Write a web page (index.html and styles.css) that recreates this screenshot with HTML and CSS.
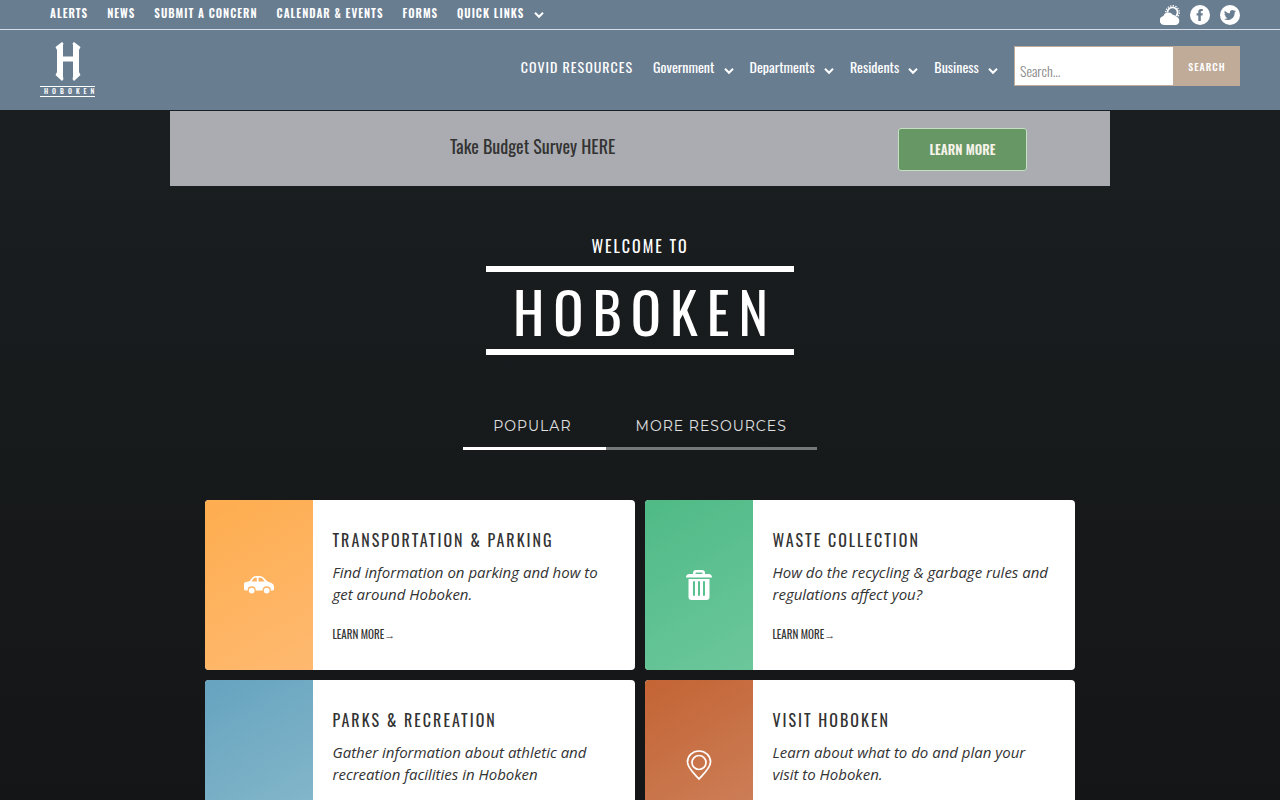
FILE: index.html
```
<!DOCTYPE html>
<html lang="en">
<head>
    <meta charset="UTF-8">
    <meta name="viewport" content="width=device-width, initial-scale=1.0">
    <title>City of Hoboken</title>
    <link rel="stylesheet" href="styles.css">
</head>
<body>
<svg class="sprite" width="0" height="0" aria-hidden="true">
    <symbol id="chevron" viewBox="0 0 10 8">
        <path d="M1 1.8 L5 5.8 L9 1.8" fill="none" stroke="currentColor" stroke-width="2"/>
    </symbol>
</svg>

<header>
    <div class="top-bar">
        <nav class="top-nav">
            <a href="#">Alerts</a>
            <a href="#">News</a>
            <a href="#">Submit a Concern</a>
            <a href="#">Calendar &amp; Events</a>
            <a href="#">Forms</a>
            <a href="#">Quick Links <svg class="chevron"><use href="#chevron"/></svg></a>
        </nav>
        <div class="social">
            <a href="#" aria-label="Weather">
                <svg viewBox="0 0 20 20">
                    <circle cx="12.5" cy="7.5" r="6.8" fill="none" stroke="#fff" stroke-width="1.2" stroke-dasharray="1.4 1.27"/>
                    <circle cx="12.5" cy="7.5" r="5.1" fill="none" stroke="#fff" stroke-width="1.8"/>
                    <path d="M4 20 A4.6 4.6 0 0 1 3.4 10.9 A5.3 5.3 0 0 1 12.8 9.8 A3.6 3.6 0 0 1 15.8 11.4 A4.4 4.4 0 0 1 15.8 20 Z" fill="#fff" stroke="#697d91" stroke-width="0.8" paint-order="stroke"/>
                </svg>
            </a>
            <a href="#" aria-label="Facebook">
                <svg viewBox="0 0 20 20">
                    <circle cx="10" cy="10" r="10" fill="#fff"/>
                    <path d="M8.3 16 V10.4 H6.6 V8.2 H8.3 V6.8 C8.3 4.9 9.3 4 11 4 H12.8 V6.1 H11.6 C11 6.1 10.8 6.4 10.8 7 V8.2 H12.8 L12.5 10.4 H10.8 V16 Z" fill="#697d91"/>
                </svg>
            </a>
            <a href="#" aria-label="Twitter">
                <svg viewBox="0 0 20 20">
                    <circle cx="10" cy="10" r="10" fill="#fff"/>
                    <path d="M16 6.3 L14.6 7.7 C14.8 12 11.5 15 7.8 15 C6.3 15 5 14.6 4 13.9 C5.4 14 6.6 13.6 7.5 12.9 C6.4 12.8 5.6 12.1 5.3 11.2 L6.3 11.2 C5.1 10.8 4.4 9.9 4.4 8.7 L5.5 9 C4.4 8.2 4.2 6.8 4.8 5.7 C6.1 7.3 7.9 8.2 9.9 8.3 C9.5 6.3 10.8 5 12.3 5 C13 5 13.6 5.3 14.1 5.8 L15.6 5.2 L14.6 6.5 Z" fill="#697d91"/>
                </svg>
            </a>
        </div>
    </div>

    <div class="main-bar">
        <a class="logo" href="#" aria-label="Hoboken home">
            <svg viewBox="0 0 26 40">
                <path d="M7 0 L8.5 1.5 L8 3 V14.5 H18 V3 L17.5 1.5 L19 0 L25.5 5 L24 8 V30 L25.5 33 L19 39 L17.5 37 L18 35 V19.5 H8 V35 L8.5 37 L7 39 L0.5 33 L2 30 V8 L0.5 5 Z" fill="#fff"/>
            </svg>
            <span>HOBOKEN</span>
        </a>
        <nav class="main-nav">
            <a class="covid" href="#">Covid Resources</a>
            <a href="#">Government <svg class="chevron"><use href="#chevron"/></svg></a>
            <a href="#">Departments <svg class="chevron"><use href="#chevron"/></svg></a>
            <a href="#">Residents <svg class="chevron"><use href="#chevron"/></svg></a>
            <a href="#">Business <svg class="chevron"><use href="#chevron"/></svg></a>
        </nav>
        <form class="search">
            <input type="text" placeholder="Search..." aria-label="Search">
            <button type="submit">Search</button>
        </form>
    </div>
</header>

<section class="banner">
    <p>Take Budget Survey HERE</p>
    <a class="banner-button" href="#">Learn More</a>
</section>

<main>
    <div class="welcome">
        <p>Welcome to</p>
        <h1>HOBOKEN</h1>
    </div>

    <div class="tabs">
        <button class="active" type="button">Popular</button>
        <button type="button">More Resources</button>
    </div>

    <div class="cards">
        <article class="card">
            <div class="card-icon orange">
                <svg width="30" height="18" viewBox="0 0 30 18">
                    <path d="M0 7.5 Q0 6.2 2 6 L5.5 5.3 L8 2 Q9.5 0 12 0 H16 Q18 0 19.5 1.5 L23.5 5.5 L27.5 7 Q30 8 30 10.5 V13.5 Q30 14.5 28.5 14.5 H2 Q0 14.5 0 13 Z" fill="#fff"/>
                    <path d="M7.5 5.5 L9.6 2.6 Q10.3 1.7 11.3 1.7 H12.8 V5.5 Z M14.5 1.7 H16.2 Q17.5 1.7 18.3 2.6 L20.7 5.5 H14.5 Z" fill="#feb25f"/>
                    <circle cx="7.7" cy="14.3" r="4.1" fill="#feb25f"/>
                    <circle cx="22.7" cy="14.3" r="4.1" fill="#feb25f"/>
                    <circle cx="7.7" cy="14.6" r="2.9" fill="#fff"/>
                    <circle cx="22.7" cy="14.6" r="2.9" fill="#fff"/>
                </svg>
            </div>
            <div class="card-text">
                <h2>Transportation &amp; Parking</h2>
                <p>Find information on parking and how to get around Hoboken.</p>
                <a href="#">Learn More<span class="arrow">→</span></a>
            </div>
        </article>
        <article class="card">
            <div class="card-icon green">
                <svg width="26" height="30" viewBox="0 0 26 30">
                    <path d="M7 5 V3 Q7 0 10 0 H16 Q19 0 19 3 V5 H16.5 V3.5 Q16.5 2.5 15.5 2.5 H10.5 Q9.5 2.5 9.5 3.5 V5 Z" fill="#fff"/>
                    <path d="M0 7.5 Q0 4 3.5 4 H22.5 Q26 4 26 7.5 Z M2.5 9 H23.5 V27 Q23.5 30 20.5 30 H5.5 Q2.5 30 2.5 27 Z" fill="#fff"/>
                    <path d="M8 12 V25 M13 12 V25 M18 12 V25" stroke="#59c08f" stroke-width="2" stroke-linecap="round"/>
                </svg>
            </div>
            <div class="card-text">
                <h2>Waste Collection</h2>
                <p>How do the recycling &amp; garbage rules and regulations affect you?</p>
                <a href="#">Learn More<span class="arrow">→</span></a>
            </div>
        </article>
        <article class="card">
            <div class="card-icon blue"></div>
            <div class="card-text">
                <h2>Parks &amp; Recreation</h2>
                <p>Gather information about athletic and recreation facilities in Hoboken</p>
                <a href="#">Learn More<span class="arrow">→</span></a>
            </div>
        </article>
        <article class="card">
            <div class="card-icon rust">
                <svg width="26" height="30" viewBox="0 0 26 30" fill="none" stroke="#fff" stroke-width="1.7">
                    <path d="M13 29 C9 24.5 1.5 18 1.5 12 A11.5 11 0 0 1 24.5 12 C24.5 18 17 24.5 13 29 Z"/>
                    <circle cx="13" cy="12.5" r="7"/>
                </svg>
            </div>
            <div class="card-text">
                <h2>Visit Hoboken</h2>
                <p>Learn about what to do and plan your visit to Hoboken.</p>
                <a href="#">Learn More<span class="arrow">→</span></a>
            </div>
        </article>
    </div>
</main>
</body>
</html>
```
FILE: styles.css
```
* {
    box-sizing: border-box;
}

body {
    margin: 0;
    min-height: 100vh;
    font-family: 'Oswald', 'Liberation Sans', sans-serif;
    color: #333;
    background: linear-gradient(#1b2022, #141516 820px);
}

a {
    color: inherit;
    text-decoration: none;
}

.sprite {
    position: absolute;
}

.chevron {
    width: 10px;
    height: 8px;
}

header {
    color: #fff;
    background: #697d91;
}

.top-bar {
    display: flex;
    justify-content: space-between;
    align-items: center;
    height: 30px;
    padding: 0 40px 0 50px;
    border-bottom: 1px solid #d5dee8;
}

.top-nav {
    display: flex;
    gap: 19px;
    font-size: 11px;
    line-height: 26px;
    font-weight: 600;
    letter-spacing: 1px;
    text-transform: uppercase;
    padding-bottom: 3px;
}

.top-nav .chevron {
    margin-left: 6px;
    vertical-align: -1px;
}

.social {
    display: flex;
    gap: 10px;
}

.social svg {
    display: block;
    width: 20px;
    height: 20px;
}

.main-bar {
    display: flex;
    align-items: center;
    height: 80px;
    padding: 0 40px;
}

.logo {
    display: flex;
    flex-direction: column;
    align-items: center;
    gap: 4px;
    margin-right: auto;
    padding-bottom: 1px;
}

.logo svg {
    width: 26px;
    height: 40px;
}

.logo span {
    width: 55px;
    border-top: 1px solid #fff;
    border-bottom: 1px solid #fff;
    font-size: 7px;
    line-height: 9px;
    font-weight: 500;
    letter-spacing: 4px;
    text-indent: 4px;
    text-align: center;
}

.main-nav {
    display: flex;
    gap: 16px;
    margin-right: 16px;
    font-size: 14px;
    line-height: 24px;
    padding-bottom: 6px;
}

.main-nav .chevron {
    margin-left: 6px;
    vertical-align: -2px;
}

.covid {
    margin-right: 4px;
    letter-spacing: 1px;
    text-transform: uppercase;
}

.search {
    display: flex;
    height: 40px;
    margin-bottom: 8px;
    border: 1px solid #c0aa98;
}

.search input {
    width: 158px;
    padding: 8px 5px 0;
    border: 0;
    font-family: inherit;
    font-size: 14px;
    font-weight: 300;
    background: #fff;
}

.search input::placeholder {
    color: #8a8a8a;
}

.search button {
    width: 66px;
    padding: 0 0 0 2px;
    border: 0;
    font-family: inherit;
    font-size: 10px;
    font-weight: 500;
    letter-spacing: 1px;
    text-transform: uppercase;
    color: #fff;
    background: #c0aa98;
    cursor: pointer;
}

.banner {
    display: flex;
    align-items: center;
    justify-content: space-between;
    max-width: 940px;
    height: 75px;
    margin: 1px auto 0;
    padding: 2px 83px 0 280px;
    background: #abacb1;
}

.banner p {
    margin: 0;
    padding-bottom: 8px;
    font-size: 18px;
}

.banner-button {
    width: 129px;
    border: 1px solid #c5e0c5;
    border-radius: 3px;
    font-size: 13px;
    line-height: 41px;
    font-weight: 600;
    text-align: center;
    text-transform: uppercase;
    color: #f6f3ea;
    background: #679764;
}

main {
    max-width: 910px;
    margin: 0 auto;
    padding: 48px 20px 40px;
}

.welcome {
    width: 308px;
    margin: 0 auto;
    text-align: center;
    color: #fff;
}

.welcome p {
    margin: 0 0 8px;
    font-size: 16px;
    line-height: 24px;
    letter-spacing: 2px;
    text-transform: uppercase;
}

.welcome h1 {
    margin: 0;
    padding-left: 10px;
    border-top: 6px solid #fff;
    border-bottom: 6px solid #fff;
    font-size: 56px;
    line-height: 77px;
    font-weight: 400;
    letter-spacing: 9px;
}

.tabs {
    display: flex;
    justify-content: center;
    margin: 50px 0;
}

.tabs button {
    padding: 6px 30px;
    border: 0;
    border-bottom: 3px solid #757778;
    font-family: 'Montserrat', 'Open Sans', sans-serif;
    font-size: 14px;
    line-height: 30px;
    letter-spacing: 1px;
    text-transform: uppercase;
    color: #e0e0e0;
    background: none;
    cursor: pointer;
}

.tabs .active {
    padding-right: 34px;
    border-color: #fff;
}

.cards {
    display: grid;
    grid-template-columns: 1fr 1fr;
    gap: 10px;
}

.card {
    display: flex;
    min-height: 170px;
    border-radius: 4px;
    overflow: hidden;
    background: #fff;
}

.card-icon {
    display: flex;
    flex: 0 0 25%;
    align-items: center;
    justify-content: center;
}

.orange {
    background: linear-gradient(150deg, #fead4f, #feb970);
}

.green {
    background: linear-gradient(150deg, #4fba86, #6cc79b);
}

.blue {
    background: linear-gradient(150deg, #66a3bf, #8abbcc);
}

.rust {
    background: linear-gradient(150deg, #c36434, #cf8460);
}

.card-text {
    padding: 28px 20px 20px;
}

.card-text h2 {
    margin: 0 0 9px;
    font-size: 16px;
    line-height: 24px;
    font-weight: 400;
    letter-spacing: 2px;
    text-transform: uppercase;
}

.card-text p {
    margin: 0 0 19px;
    font-family: 'Open Sans', sans-serif;
    font-size: 15px;
    line-height: 22px;
    font-style: italic;
}

.card-text a {
    display: block;
    font-size: 11px;
    line-height: 20px;
    text-transform: uppercase;
}

.arrow {
    font-family: 'Liberation Serif', serif;
}
```
